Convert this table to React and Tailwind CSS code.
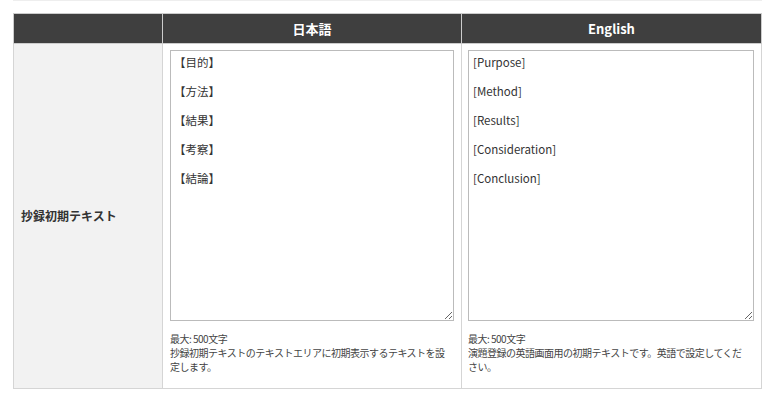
export default function App() {
  const ja = "【目的】\n\n【方法】\n\n【結果】\n\n【考察】\n\n【結論】";
  const en = "[Purpose]\n\n[Method]\n\n[Results]\n\n[Consideration]\n\n[Conclusion]";
  const font = { fontFamily: '"Noto Sans CJK JP", "Open Sans", sans-serif' };

  return (
    <div className="w-[775px] h-[403px] bg-white" style={font}>
      <div className="mx-[13px] h-px bg-[#eeeeee]" />
      <div className="pt-[12px] px-[13px]">
        <table className="w-[748px] border-collapse table-fixed text-[#333]">
          <colgroup>
            <col className="w-[149px]" />
            <col className="w-[299px]" />
            <col className="w-[300px]" />
          </colgroup>
          <thead>
            <tr className="h-[30px] bg-[#3f3f3f] text-white text-[13px] font-bold">
              <th className="border border-[#cccccc]"></th>
              <th className="border border-[#cccccc] text-center">日本語</th>
              <th className="border border-[#cccccc] text-center">English</th>
            </tr>
          </thead>
          <tbody>
            <tr className="h-[345px] align-top">
              <td className="border border-[#d5d5d5] bg-[#f2f2f2] px-[7px] align-middle text-[12px] font-bold">
                抄録初期テキスト
              </td>
              <td className="border border-[#d5d5d5] pl-[7px] pr-[7px] pt-[6px]">
                <textarea
                  defaultValue={ja}
                  className="block w-full h-[271px] border border-[#bbbbbb] px-[3px] py-[4px] text-[11.5px] leading-[14.5px] text-[#333] resize-y outline-none"
                  style={font}
                />
                <p className="mt-[11px] text-[10px] tracking-[-0.5px] leading-[14px] text-[#444]">
                  最大: 500文字
                  <br />
                  抄録初期テキストのテキストエリアに初期表示するテキストを設定します。
                </p>
              </td>
              <td className="border border-[#d5d5d5] pl-[6px] pr-[7px] pt-[6px]">
                <textarea
                  defaultValue={en}
                  className="block w-full h-[271px] border border-[#bbbbbb] px-[4px] py-[4px] text-[11.5px] leading-[14.5px] text-[#333] resize-y outline-none"
                  style={font}
                />
                <p className="mt-[11px] max-w-[280px] text-[10px] tracking-[-0.5px] leading-[14px] text-[#444]">
                  最大: 500文字
                  <br />
                  演題登録の英語画面用の初期テキストです。英語で設定してください。
                </p>
              </td>
            </tr>
          </tbody>
        </table>
      </div>
    </div>
  );
}
